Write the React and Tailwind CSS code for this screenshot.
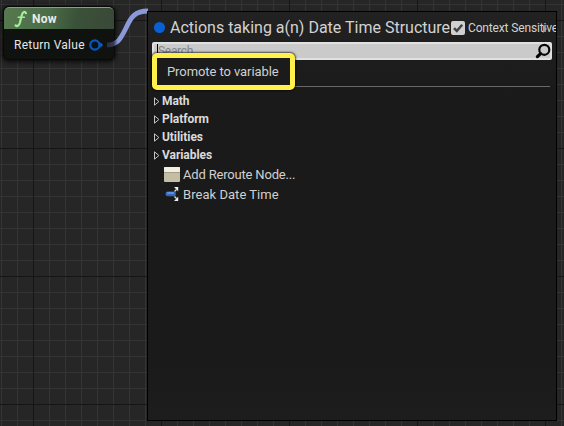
import React from "react";

const categories = ["Math", "Platform", "Utilities", "Variables"];

function GraphGrid() {
  return (
    <svg className="absolute inset-0 h-full w-full" shapeRendering="crispEdges">
      <defs>
        <pattern id="minor" x="1" y="4" width="16" height="16" patternUnits="userSpaceOnUse">
          <path d="M0 0H16V1H1V16H0Z" fill="#343434" />
        </pattern>
        <pattern id="major" x="33" y="20" width="128" height="128" patternUnits="userSpaceOnUse">
          <path d="M0 0H128V1H1V128H0Z" fill="#161616" />
        </pattern>
      </defs>
      <rect width="100%" height="100%" fill="url(#minor)" />
      <rect width="100%" height="100%" fill="url(#major)" />
    </svg>
  );
}

function NowNode() {
  return (
    <div className="absolute left-[3px] top-[6px] h-[54px] w-[112px] overflow-hidden rounded-[6px] border border-[#080a08] bg-[#101210] shadow-[0_1px_4px_1px_rgba(0,0,0,0.75)]">
      <div className="flex h-[22px] items-center rounded-t-[5px] border-t border-[#8c9c8b] bg-[linear-gradient(100deg,#56794f_0%,#4b6d48_40%,#3a5239_65%,#3a4838_100%)] pl-[9px]">
        <svg width="16" height="18" viewBox="0 0 16 18" fill="none" stroke="#a4ed9b" strokeLinecap="round">
          <path d="M13 3.2C12 1.2 9.9 1.5 9 4.5L6.8 13C6 15.8 4 16.8 2.6 15.4" strokeWidth="2.2" />
          <path d="M5.2 7.2H11.4" strokeWidth="1.6" />
        </svg>
        <span className="ml-[3px] text-[12px] font-bold leading-none tracking-[0.2px] text-[#e8ece8]">Now</span>
      </div>
      <div className="flex h-[32px] items-center pl-[10px]">
        <span className="whitespace-nowrap text-[12px] leading-none tracking-[0.25px] text-[#e6e6e6]">Return Value</span>
        <svg className="ml-[4px] shrink-0" width="15" height="12" viewBox="0 0 15 12">
          <circle cx="5.8" cy="6" r="4.6" fill="#07101d" stroke="#0856b9" strokeWidth="2.2" />
          <path d="M11.2 3.2L14 6L11.2 8.8Z" fill="#0b62d0" />
        </svg>
      </div>
    </div>
  );
}

function RerouteIcon() {
  return (
    <svg width="16" height="15" viewBox="0 0 16 15">
      <rect width="16" height="15" rx="1" fill="#c4bea5" />
      <rect width="16" height="5" rx="1" fill="#f0efdf" />
      <path d="M0 5H16V6H0Z" fill="#a49e88" />
    </svg>
  );
}

function BreakIcon() {
  return (
    <svg width="16" height="16" viewBox="0 0 16 16">
      <path d="M10.5 5.5L12.5 3.5M10.5 10.5L12.5 12.5" stroke="#dedede" strokeWidth="1.3" />
      <path d="M10 1H14.2V5.2ZM10 15H14.2V10.8Z" fill="#eee" />
      <rect x="1.5" y="5.6" width="10.5" height="4.6" rx="2.2" fill="#3468ba" />
      <path d="M3.2 7H10" stroke="#73a2ea" strokeWidth="1.4" />
    </svg>
  );
}

function ActionMenu() {
  return (
    <div className="absolute left-[147px] top-[11px] flex h-[410px] w-[410px] flex-col overflow-hidden border border-black bg-[linear-gradient(#222_0px,#1e1e1e_35px,#1a1a1a_85px,#1a1a1a_350px,#1d1d1d_100%)] px-[4px]">
      <div className="flex h-[30px] shrink-0 items-center whitespace-nowrap pl-[2px] pt-[2px]">
        <span className="mb-px h-[11px] w-[11px] shrink-0 rounded-full bg-[#0860d5]" />
        <span className="ml-[5px] w-[280px] shrink-0 text-[16px] leading-none text-[#d2d2d2]">Actions taking a(n) Date Time Structure</span>
        <span className="mb-px ml-[1px] flex h-[14px] w-[14px] shrink-0 items-center justify-center rounded-[2px] bg-[#d0d0d0]">
          <svg width="14" height="14" viewBox="0 0 14 14" fill="none">
            <path d="M3 7.2L5.8 10L11.2 3.8" stroke="#444" strokeWidth="2.5" />
          </svg>
        </span>
        <span className="relative ml-[3px] shrink-0 text-[12px] leading-none tracking-[-0.15px] text-[#d2d2d2]">
          Context Sensitive
          <svg className="absolute left-[75px] top-[3px]" width="5" height="8" viewBox="0 0 5 8">
            <path d="M0 0L4 4L0 8Z" fill="#a0a0a0" />
          </svg>
        </span>
      </div>
      <div className="flex h-[18px] w-[400px] shrink-0 justify-between rounded-[2px] border-2 border-[#e1e1e1] bg-[#cacaca]">
        <span className="ml-[3px] h-[15px] border-l border-black text-[12px] leading-[15px] tracking-[-0.3px] text-[#858585]">Search</span>
        <svg className="-mr-px -mt-px" width="16" height="16" viewBox="0 0 16 16" fill="none" stroke="#050505">
          <circle cx="9.3" cy="6.8" r="5" strokeWidth="2.2" />
          <path d="M5.6 10.6L2.4 13.6" strokeWidth="3.2" strokeLinecap="round" />
        </svg>
      </div>
      <div className="flex h-[27px] w-[398px] shrink-0 items-center border-b border-[#686868]" />
      <div className="mt-[5px] flex flex-col">
        {categories.map((name) => (
          <div key={name} className="flex h-[18px] items-center pl-[2px]">
            <svg width="6" height="9" viewBox="0 0 6 9" fill="none">
              <path d="M0.5 0.8V8.2L4.9 4.5Z" stroke="#c4c4c4" strokeWidth="1" />
            </svg>
            <span className="ml-[2px] text-[12px] font-bold leading-none tracking-[-0.05px] text-[#dadada]">{name}</span>
          </div>
        ))}
      </div>
      <div className="flex h-[20px] items-center pl-[12px]">
        <RerouteIcon />
        <span className="ml-[3px] text-[13px] leading-none tracking-[-0.18px] text-[#d0d0d0]">Add Reroute Node...</span>
      </div>
      <div className="flex h-[20px] items-center pl-[12px]">
        <BreakIcon />
        <span className="ml-[3px] text-[13px] leading-none tracking-[0.04px] text-[#d0d0d0]">Break Date Time</span>
      </div>
    </div>
  );
}

export default function App() {
  return (
    <main className="relative h-[426px] w-[564px] overflow-hidden bg-[#262626] font-[Roboto,sans-serif]">
      <GraphGrid />
      <NowNode />
      <svg className="absolute left-[104px] top-0" width="44" height="50" viewBox="0 0 44 50" fill="none">
        <defs>
          <linearGradient id="wire" x1="2" x2="16" y1="0" y2="0" gradientUnits="userSpaceOnUse">
            <stop stopColor="#272a38" />
            <stop offset="0.55" stopColor="#353b58" />
            <stop offset="0.85" stopColor="#8b99d9" />
            <stop offset="1" stopColor="#8b99d9" />
          </linearGradient>
        </defs>
        <path d="M3 45C14 45 17 38 22 28C27 17 31 11 44 11" stroke="url(#wire)" strokeWidth="4.8" />
      </svg>
      <ActionMenu />
      <div className="absolute left-[152px] top-[53px] flex h-[37px] w-[143px] items-center rounded-[5px] border-[5px] border-[#fff04a] bg-[#1b1b1b] pl-[10px] shadow-[0_0_2px_1px_rgba(0,0,0,0.65)]">
        <span className="whitespace-nowrap text-[13px] leading-none tracking-[-0.08px] text-[#d0d0d0]">Promote to variable</span>
      </div>
    </main>
  );
}
